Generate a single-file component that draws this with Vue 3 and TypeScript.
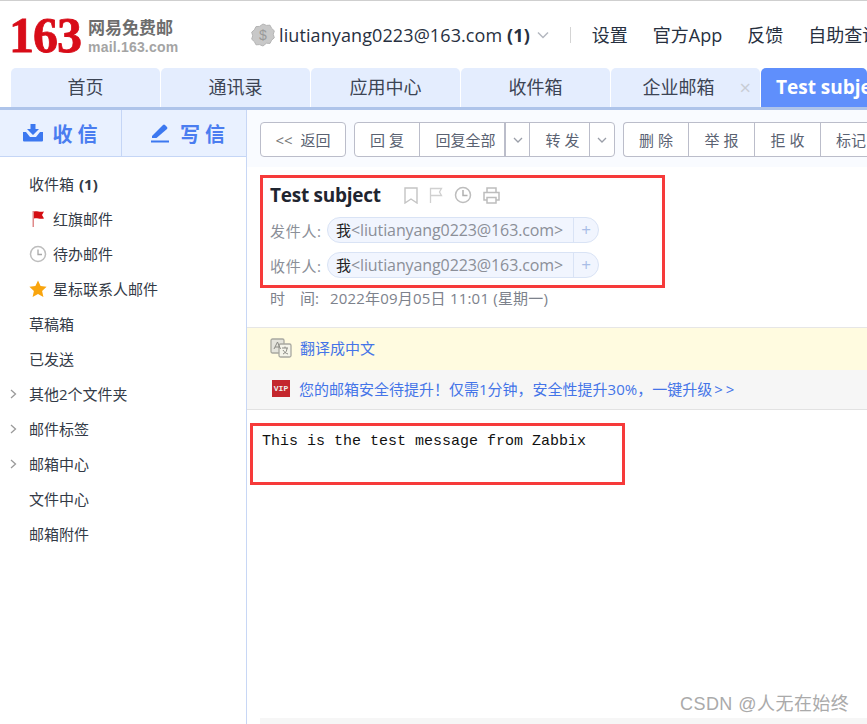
<script setup lang="ts">
const tabs = ['首页', '通讯录', '应用中心', '收件箱', '企业邮箱']
const navLinks = ['设置', '官方App', '反馈', '自助查询']
const folders = [
  { id: 'inbox', label: '收件箱', count: '(1)' },
  { id: 'flag', label: '红旗邮件', icon: 'flag' },
  { id: 'todo', label: '待办邮件', icon: 'clock' },
  { id: 'star', label: '星标联系人邮件', icon: 'star' },
  { id: 'draft', label: '草稿箱' },
  { id: 'sent', label: '已发送' },
  { id: 'other', label: '其他2个文件夹', arrow: true },
  { id: 'tags', label: '邮件标签', arrow: true },
  { id: 'center', label: '邮箱中心', arrow: true },
  { id: 'files', label: '文件中心' },
  { id: 'attach', label: '邮箱附件' }
]
const people = [
  { id: 'from', label: '发件人:' },
  { id: 'to', label: '收件人:' }
]
const actions = ['删 除', '举 报', '拒 收', '标记']
</script>

<template>
  <div class="page">
    <header class="head">
      <div class="logo">
        <span class="logo-num">163</span>
        <div class="logo-text">
          <span class="logo-cn">网易免费邮</span>
          <span class="logo-en">mail.163.com</span>
        </div>
      </div>
      <svg class="coin" width="24" height="24" viewBox="0 0 24 24">
        <path d="M12 1l3.400 1.400 3.600-.2 1.600 3.200 2.700 2.400-1 3.500 1 3.500-2.700 2.400-1.600 3.200-3.600-.2L12 23l-3.400-1.400-3.600.2-1.600-3.200L.7 16.200l1-3.500-1-3.500 2.700-2.400L5 3.600l3.600-.2z" fill="#c8c8c8" stroke="#b4b4b4" />
        <text x="12" y="17" text-anchor="middle" class="coin-s">$</text>
      </svg>
      <span class="account">liutianyang0223@163.com <b>(1)</b></span>
      <svg class="acc-chev" width="12" height="8" viewBox="0 0 12 8"><path d="M1 1.500l5 5 5-5" fill="none" stroke="#b4b8c0" stroke-width="1.500" /></svg>
      <span class="head-sep"></span>
      <nav class="nav">
        <span v-for="l in navLinks" :key="l">{{ l }}</span>
      </nav>
    </header>

    <div class="tabs">
      <div v-for="t in tabs" :key="t" class="tab" :class="{ closable: t === '企业邮箱' }">
        {{ t }}
        <span v-if="t === '企业邮箱'" class="tab-x">×</span>
      </div>
      <div class="tab active">Test subject</div>
    </div>

    <div class="body">
      <aside class="side">
        <div class="side-top">
          <div class="side-btn first">
            <svg width="20" height="18" viewBox="0 0 20 18"><path d="M7.500 0h5v5H16l-6 6-6-6h3.500z" fill="#3c78f0" /><path d="M0 8h3l4 5h6l4-5h3v8.500a1 1 0 0 1-1 1H1a1 1 0 0 1-1-1z" fill="#3c78f0" /></svg>
            <span>收 信</span>
          </div>
          <div class="side-btn second">
            <svg width="20" height="20" viewBox="0 0 20 20"><path d="M1 13L12 2a1.500 1.500 0 0 1 2 0l2 2a1.500 1.500 0 0 1 0 2L5.500 15H1z" fill="#3c78f0" /><rect x="0" y="17.500" width="18" height="2" fill="#3c78f0" /></svg>
            <span>写 信</span>
          </div>
        </div>
        <ul class="folders">
          <li v-for="f in folders" :key="f.id" class="folder">
            <svg v-if="f.arrow" class="arrow" width="7" height="10" viewBox="0 0 7 10"><path d="M1 1l4.500 4L1 9" fill="none" stroke="#9a9a9a" stroke-width="1.300" /></svg>
            <span v-if="f.icon" class="f-icon">
              <svg v-if="f.icon === 'flag'" width="18" height="18" viewBox="0 0 18 18"><rect x="3.500" y="1" width="1.500" height="16" fill="#e08a8a" /><path d="M5 1.500c3-1 5 1 10 0l-2 3.500 2 3.500c-5 1-7-1-10 0z" fill="#d40d12" /></svg>
              <svg v-else-if="f.icon === 'clock'" width="18" height="18" viewBox="0 0 18 18"><circle cx="9" cy="9" r="7.500" fill="none" stroke="#bdbdbd" stroke-width="1.500" /><path d="M9 4.500V9.500H13" fill="none" stroke="#a8a8a8" stroke-width="1.300" /></svg>
              <svg v-else width="18" height="18" viewBox="0 0 18 18"><path d="M9 .5l2.600 5.600 6 .7-4.500 4.100 1.300 6.100L9 14l-5.400 3 1.300-6.100L.4 6.800l6-.7z" fill="#f9a50e" /></svg>
            </span>
            <span>{{ f.label }}</span>
            <b v-if="f.count" class="count">{{ f.count }}</b>
          </li>
        </ul>
      </aside>

      <main class="main">
        <div class="toolbar">
          <div class="group">
            <button class="btn back"><span class="lt">&lt;&lt;</span>返回</button>
          </div>
          <div class="group">
            <button class="btn w65">回 复</button>
            <button class="btn w86">回复全部</button>
            <button class="btn chev">
              <svg width="10" height="6" viewBox="0 0 10 6"><path d="M1 1l4 4 4-4" fill="none" stroke="#9a9ea8" stroke-width="1.300" /></svg>
            </button>
            <button class="btn w60">转 发</button>
            <button class="btn chev">
              <svg width="10" height="6" viewBox="0 0 10 6"><path d="M1 1l4 4 4-4" fill="none" stroke="#9a9ea8" stroke-width="1.300" /></svg>
            </button>
          </div>
          <div class="group open">
            <button v-for="a in actions" :key="a" class="btn w66" :class="{ mark3: a === '标记' }">{{ a }}</button>
          </div>
        </div>

        <section class="meta">
          <div class="subject-row">
            <h1 class="subject">Test subject</h1>
            <div class="subject-icons">
              <svg width="14" height="17" viewBox="0 0 14 17"><path d="M1 1h12v15l-6-4-6 4z" fill="none" stroke="#c4c4c4" stroke-width="1.400" /></svg>
              <svg width="14" height="17" viewBox="0 0 14 17"><path d="M1.500 16V1.500h11l-2 3.500 2 3.500h-11" fill="none" stroke="#d0d0d0" stroke-width="1.300" /></svg>
              <svg width="18" height="18" viewBox="0 0 18 18"><circle cx="9" cy="9" r="7.500" fill="none" stroke="#bdbdbd" stroke-width="1.500" /><path d="M9 4v5.500h4.500" fill="none" stroke="#b0b0b0" stroke-width="1.500" /></svg>
              <svg width="17" height="17" viewBox="0 0 17 17"><path d="M4 5V1h9v4M4 13H1V5.500h15V13h-3" fill="none" stroke="#bdbdbd" stroke-width="1.500" /><rect x="4" y="10.500" width="9" height="5.500" fill="none" stroke="#bdbdbd" stroke-width="1.500" /></svg>
            </div>
          </div>
          <div v-for="p in people" :key="p.id" class="person">
            <span class="p-label">{{ p.label }}</span>
            <span class="pill">
              <span class="pill-name"><i>我</i>&lt;liutianyang0223@163.com&gt;</span>
              <span class="pill-add">+</span>
            </span>
          </div>
          <div class="time"><span class="time-label">时　间:</span>2022年09月05日 11:01 (星期一)</div>
        </section>

        <div class="translate">
          <svg width="22" height="20" viewBox="0 0 22 20"><rect x="1" y="1" width="13" height="14" rx="1.500" fill="#e4e4dc" stroke="#a8a8a0" stroke-width="1.300" /><rect x="9" y="6" width="12" height="13" rx="1.500" fill="#f4f4ea" stroke="#a8a8a0" stroke-width="1.300" /><path d="M4 11l3.500-7 3 7M5 9h4.500" fill="none" stroke="#8a8a84" stroke-width="1" /><path d="M12 10h6M15 8.500v1.500M13 16c2.500-1 4-3 4-6M13 12c1 2 3 3.500 5 4" fill="none" stroke="#8a8a84" stroke-width="1" /></svg>
          <a class="link">翻译成中文</a>
        </div>
        <div class="vip">
          <span class="vip-badge">VIP</span>
          <a class="link">您的邮箱安全待提升！仅需1分钟，安全性提升30%，一键升级<span class="more">&gt;&gt;</span></a>
        </div>
        <div class="message">This is the test message from Zabbix</div>
        <div class="grow"></div>
        <div class="scroll"></div>
      </main>
    </div>

    <div class="mark mark-a"></div>
    <div class="mark mark-b"></div>
    <div class="csdn">CSDN @人无在始终</div>
  </div>
</template>

<style scoped>
.page {
  position: relative;
  width: 867px;
  height: 724px;
  overflow: hidden;
  background: #fff;
  display: flex;
  flex-direction: column;
  font-family: "Open Sans", "Noto Sans CJK SC", sans-serif;
  color: #333;
}
.head {
  height: 67px;
  flex: none;
  box-sizing: content-box;
  border-top: 1px solid #cfcfcf;
  display: flex;
  align-items: center;
  padding-left: 11px;
  white-space: nowrap;
  overflow: hidden;
}
.logo {
  display: flex;
  align-items: center;
  width: 240px;
  flex: none;
}
.logo-num {
  font-family: "Liberation Serif", serif;
  font-weight: 700;
  font-size: 50px;
  letter-spacing: -1px;
  color: #d80c18;
  line-height: 1;
  width: 79px;
  margin-left: -2px;
  -webkit-text-stroke: 0.8px #d80c18;
}
.logo-text {
  display: flex;
  flex-direction: column;
  gap: 1px;
  padding-top: 3px;
  color: #777;
  font-weight: 700;
}
.logo-cn {
  font-size: 17px;
  line-height: 20px;
  color: #6d6d6d;
}
.logo-en {
  font-family: "Liberation Sans", sans-serif;
  font-size: 14px;
  line-height: 16px;
  color: #a4a4a4;
  letter-spacing: 0.2px;
}
.coin-s {
  font-family: "Liberation Sans", sans-serif;
  font-size: 14px;
  fill: #9a9a9a;
}
.coin {
  flex: none;
  margin-right: 4px;
}
.account {
  font-size: 18px;
  color: #27303f;
  letter-spacing: 0.1px;
}
.account b { font-weight: 700; }
.acc-chev { margin-left: 7px; flex: none; }
.head-sep {
  width: 1px;
  height: 16px;
  background: #d4d4d4;
  margin: 0 21px;
  flex: none;
}
.nav {
  display: flex;
  gap: 25px;
  font-size: 18px;
  color: #27303f;
  position: relative;
  top: -1px;
}
.tabs {
  height: 39px;
  flex: none;
  box-sizing: content-box;
  display: flex;
  gap: 1px;
  padding-left: 11px;
  border-bottom: 3px solid #aec4ea;
  overflow: hidden;
}
.tab {
  position: relative;
  width: 149px;
  flex: none;
  box-sizing: border-box;
  background: #e4edfe;
  border-radius: 5px 5px 0 0;
  text-align: center;
  line-height: 39px;
  font-size: 18px;
  color: #3c4454;
}
.tab.closable { padding-right: 14px; }
.tab-x {
  position: absolute;
  right: 9px;
  top: 0;
  font-size: 20px;
  color: #c8ccd4;
  line-height: 39px;
}
.tab.active {
  width: 106px;
  background: #5f8ffc;
  color: #fff;
  font-size: 19px;
  font-weight: 700;
  text-align: left;
  padding-left: 15px;
  white-space: nowrap;
  overflow: hidden;
}
.body {
  flex: 1;
  display: flex;
  min-height: 0;
}
.side {
  width: 246px;
  flex: none;
  box-sizing: content-box;
  border-right: 1px solid #c8d7f5;
}
.side-top {
  height: 46px;
  display: flex;
  background: #e9f1ff;
  border-bottom: 1px solid #c5d6f6;
}
.side-btn {
  display: flex;
  align-items: center;
  justify-content: center;
  gap: 9px;
  font-size: 20px;
  font-weight: 700;
  color: #4a7df0;
  box-sizing: border-box;
}
.side-btn.first {
  width: 122px;
  flex: none;
  border-right: 1px solid #c5d6f6;
}
.side-btn.second {
  flex: 1;
  padding-left: 8px;
}
.folders {
  list-style: none;
  margin: 9px 0 0;
  padding: 0 0 0 29px;
}
.folder {
  position: relative;
  height: 35px;
  display: flex;
  align-items: center;
  font-size: 15px;
  line-height: 20px;
  color: #333a46;
}
.arrow {
  position: absolute;
  left: -19px;
  top: 13px;
}
.f-icon {
  width: 24px;
  flex: none;
  display: flex;
  align-items: center;
}
.count {
  margin-left: 5px;
  font-weight: 700;
}
.main {
  flex: 1;
  min-width: 0;
  display: flex;
  flex-direction: column;
  overflow: hidden;
}
.toolbar {
  height: 57px;
  flex: none;
  background: #f9fbff;
  box-sizing: border-box;
  padding: 12px 0 0 13px;
  display: flex;
  gap: 8px;
  white-space: nowrap;
}
.group {
  display: flex;
  height: 35px;
  flex: none;
  background: #fff;
  border: 1px solid #bbbdca;
  border-radius: 4px;
  box-sizing: border-box;
}
.group.open {
  border-right: 0;
  border-radius: 4px 0 0 4px;
}
.btn {
  height: 33px;
  padding: 0;
  background: none;
  border: 0;
  border-right: 1px solid #bbbdca;
  font: inherit;
  font-size: 15px;
  color: #5a6272;
  box-sizing: border-box;
  flex: none;
}
.btn:last-child { border-right: 0; }
.back { width: 84px; }
.lt {
  margin-right: 8px;
  color: #777;
}
.w65 { width: 65px; }
.w66 { width: 66px; }
.group.open .w66:first-child { width: 65px; }
.w86 {
  width: 86px;
  border-right-width: 2px;
  padding-left: 7px;
}
.w60 {
  width: 60px;
  padding-left: 6px;
}
.btn.mark3 { padding-right: 6px; }
.chev {
  width: 24px;
  display: flex;
  align-items: center;
  justify-content: center;
}
.meta {
  height: 160px;
  flex: none;
  box-sizing: border-box;
  padding-left: 23px;
}
.subject-row {
  height: 50px;
  padding-top: 15px;
  box-sizing: border-box;
  display: flex;
  align-items: flex-start;
}
.subject {
  margin: 0;
  width: 134px;
  font-size: 19px;
  font-weight: 700;
  color: #1f2530;
  line-height: 26px;
  letter-spacing: -0.25px;
}
.subject-icons {
  display: flex;
  align-items: center;
  gap: 11px;
  height: 26px;
}
.person {
  height: 26px;
  margin-bottom: 9px;
  display: flex;
  align-items: center;
}
.p-label {
  width: 57px;
  font-size: 15px;
  color: #8b8f98;
  white-space: nowrap;
  letter-spacing: 0.7px;
}
.pill {
  height: 26px;
  display: flex;
  border: 1px solid #d9e3f5;
  border-radius: 13px;
  background: #f1f5fe;
  box-sizing: border-box;
}
.pill-name {
  width: 246px;
  padding-left: 8px;
  box-sizing: border-box;
  font-size: 16px;
  line-height: 24px;
  color: #8b8f98;
  border-right: 1px solid #d9e3f5;
  white-space: nowrap;
  letter-spacing: -0.1px;
}
.pill-name i {
  font-style: normal;
  font-size: 15px;
  color: #222;
}
.pill-add {
  width: 24px;
  text-align: center;
  color: #a8bde6;
  font-size: 17px;
  line-height: 23px;
}
.time {
  display: flex;
  font-size: 15px;
  line-height: 22px;
  color: #7d828c;
  margin-top: 5px;
  letter-spacing: 0.2px;
  white-space: nowrap;
}
.time-label {
  width: 60px;
  letter-spacing: 0;
  flex: none;
}
.translate {
  height: 43px;
  flex: none;
  box-sizing: border-box;
  background: #fffbe0;
  border-top: 1px solid #e6e6e6;
  display: flex;
  align-items: center;
  padding: 0 0 3px 23px;
  gap: 8px;
}
.link {
  font-size: 15px;
  color: #4474e8;
  white-space: nowrap;
}
.more { letter-spacing: 3px; margin-left: 2px; }
.vip {
  height: 40px;
  flex: none;
  box-sizing: border-box;
  background: #f6f6f6;
  border-bottom: 1px solid #e2e2e2;
  display: flex;
  align-items: center;
  padding: 0 0 2px 25px;
  gap: 9px;
}
.vip-badge {
  width: 18px;
  height: 17px;
  background: #c4272d;
  color: #eee;
  font-family: "Liberation Mono", monospace;
  font-size: 8px;
  font-weight: 700;
  line-height: 17px;
  text-align: center;
  flex: none;
}
.message {
  margin: 22px 0 0 15px;
  font-family: "Liberation Mono", monospace;
  font-size: 15px;
  line-height: 20px;
  color: #111;
  white-space: nowrap;
}
.grow { flex: 1; }
.scroll {
  height: 6px;
  margin-left: 13px;
  background: #f6f6f6;
  flex: none;
}
.mark {
  position: absolute;
  border: 3px solid #f63a3a;
  box-sizing: border-box;
  pointer-events: none;
}
.mark-a {
  left: 260px;
  top: 175px;
  width: 405px;
  height: 113px;
}
.mark-b {
  left: 250px;
  top: 423px;
  width: 375px;
  height: 62px;
}
.csdn {
  position: absolute;
  left: 680px;
  top: 691px;
  font-family: "Liberation Sans", "Noto Sans CJK SC", sans-serif;
  font-size: 18px;
  line-height: 26px;
  letter-spacing: 0.45px;
  color: #aaa;
  white-space: nowrap;
}
</style>
